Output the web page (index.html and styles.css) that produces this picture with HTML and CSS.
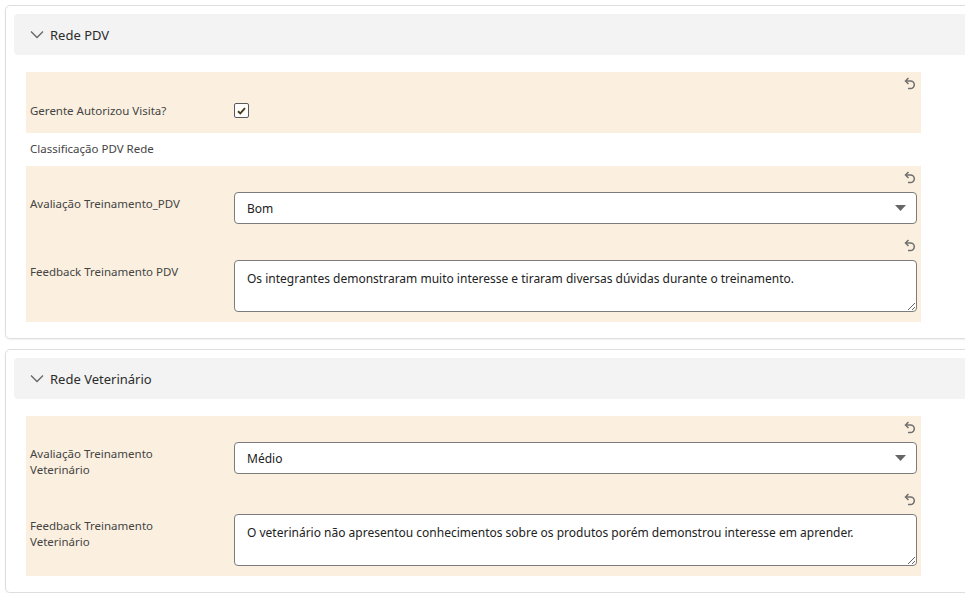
FILE: index.html
```html
<!DOCTYPE html>
<html lang="pt">
<head>
<meta charset="utf-8">
<link rel="stylesheet" href="styles.css">
</head>
<body>
<div class="page">
  <section class="card">
    <div class="card-header">
      <svg class="chev" width="14" height="9" viewBox="0 0 14 9"><path d="M1 1.5 L7 7.5 L13 1.5" fill="none" stroke="#666" stroke-width="1.3"/></svg>
      <span class="card-title">Rede PDV</span>
    </div>
    <div class="card-body">
      <div class="field">
        <div class="field-top"><svg class="undo" width="12" height="13" viewBox="0 0 12 13"><path d="M4.5 1 L1.5 4 L4.5 7" fill="none" stroke="#6f6f6f" stroke-width="1.5"/><path d="M2 4 H6.5 A3.8 3.8 0 0 1 6.5 11.6 H4" fill="none" stroke="#6f6f6f" stroke-width="1.5"/></svg></div>
        <div class="field-main check-row">
          <div class="label">Gerente Autorizou Visita?</div>
          <div class="control"><span class="checkbox"><svg width="9" height="8" viewBox="0 0 9 8"><path d="M1 4.3 L3.3 6.5 L8 1.2" fill="none" stroke="#4a3b17" stroke-width="1.9"/></svg></span></div>
        </div>
      </div>
      <div class="plain-label">Classificação PDV Rede</div>
      <div class="field">
        <div class="field-top"><svg class="undo" width="12" height="13" viewBox="0 0 12 13"><path d="M4.5 1 L1.5 4 L4.5 7" fill="none" stroke="#6f6f6f" stroke-width="1.5"/><path d="M2 4 H6.5 A3.8 3.8 0 0 1 6.5 11.6 H4" fill="none" stroke="#6f6f6f" stroke-width="1.5"/></svg></div>
        <div class="field-main">
          <div class="label">Avaliação Treinamento_PDV</div>
          <div class="control"><div class="select"><span>Bom</span><svg width="11" height="6" viewBox="0 0 11 6"><path d="M0 0 H11 L5.5 6 Z" fill="#666"/></svg></div></div>
        </div>
      </div>
      <div class="field">
        <div class="field-top"><svg class="undo" width="12" height="13" viewBox="0 0 12 13"><path d="M4.5 1 L1.5 4 L4.5 7" fill="none" stroke="#6f6f6f" stroke-width="1.5"/><path d="M2 4 H6.5 A3.8 3.8 0 0 1 6.5 11.6 H4" fill="none" stroke="#6f6f6f" stroke-width="1.5"/></svg></div>
        <div class="field-main">
          <div class="label">Feedback Treinamento PDV</div>
          <div class="control"><textarea class="textarea" readonly>Os integrantes demonstraram muito interesse e tiraram diversas dúvidas durante o treinamento.</textarea></div>
        </div>
      </div>
    </div>
  </section>

  <section class="card">
    <div class="card-header">
      <svg class="chev" width="14" height="9" viewBox="0 0 14 9"><path d="M1 1.5 L7 7.5 L13 1.5" fill="none" stroke="#666" stroke-width="1.3"/></svg>
      <span class="card-title">Rede Veterinário</span>
    </div>
    <div class="card-body">
      <div class="field">
        <div class="field-top"><svg class="undo" width="12" height="13" viewBox="0 0 12 13"><path d="M4.5 1 L1.5 4 L4.5 7" fill="none" stroke="#6f6f6f" stroke-width="1.5"/><path d="M2 4 H6.5 A3.8 3.8 0 0 1 6.5 11.6 H4" fill="none" stroke="#6f6f6f" stroke-width="1.5"/></svg></div>
        <div class="field-main">
          <div class="label">Avaliação Treinamento<br>Veterinário</div>
          <div class="control"><div class="select"><span>Médio</span><svg width="11" height="6" viewBox="0 0 11 6"><path d="M0 0 H11 L5.5 6 Z" fill="#666"/></svg></div></div>
        </div>
      </div>
      <div class="field">
        <div class="field-top"><svg class="undo" width="12" height="13" viewBox="0 0 12 13"><path d="M4.5 1 L1.5 4 L4.5 7" fill="none" stroke="#6f6f6f" stroke-width="1.5"/><path d="M2 4 H6.5 A3.8 3.8 0 0 1 6.5 11.6 H4" fill="none" stroke="#6f6f6f" stroke-width="1.5"/></svg></div>
        <div class="field-main">
          <div class="label">Feedback Treinamento<br>Veterinário</div>
          <div class="control"><textarea class="textarea" readonly>O veterinário não apresentou conhecimentos sobre os produtos porém demonstrou interesse em aprender.</textarea></div>
        </div>
      </div>
    </div>
  </section>
</div>
</body>
</html>
```

FILE: styles.css
```css
html, body {
  margin: 0;
  padding: 0;
  background: #ffffff;
  overflow: hidden;
}
body {
  font-family: "Noto Sans", "Open Sans", sans-serif;
  color: #333;
}
.page {
  padding: 5px 0 0 5px;
  width: 990px;
  display: flex;
  flex-direction: column;
  gap: 10px;
}
.card {
  border: 1px solid #dedede;
  border-radius: 5px;
  padding: 8px 8px 16px 8px;
  box-shadow: 0 1px 2px rgba(0,0,0,0.06);
}
.card-header {
  height: 41px;
  background: #f3f3f3;
  border-radius: 4px;
  display: flex;
  align-items: center;
  padding-left: 16px;
  gap: 6px;
}
.chev { display: block; }
.card-title {
  font-size: 13px;
  color: #2b2b2b;
}
.card-body {
  padding: 17px 0 0 12px;
  width: 895px;
}
.field {
  background: #fbf0df;
  padding: 0 4px 10px 4px;
}
.field-top {
  height: 26px;
  display: flex;
  justify-content: flex-end;
  align-items: flex-start;
  padding-top: 5px;
  box-sizing: border-box;
}
.undo { display: block; margin-right: 1px; }
.field-main {
  display: grid;
  grid-template-columns: 204px 1fr;
}
.label {
  font-size: 11.5px;
  line-height: 16px;
  color: #444;
  padding-top: 4px;
}
.check-row {
  height: 25px;
  align-items: center;
}
.check-row .label { padding-top: 1px; }
.checkbox {
  width: 13px;
  height: 13px;
  border: 1px solid #5a5a5a;
  border-radius: 2px;
  background: #fff;
  display: flex;
  align-items: center;
  justify-content: center;
}
.plain-label {
  font-size: 11.5px;
  line-height: 16px;
  color: #444;
  padding: 8px 4px 9px 4px;
}
.select {
  height: 30px;
  border: 1px solid #7c7c7c;
  border-radius: 4px;
  background: #fff;
  display: flex;
  align-items: center;
  justify-content: space-between;
  padding: 0 10px 0 12px;
  font-size: 12px;
  color: #222;
}
.textarea {
  display: block;
  width: 100%;
  box-sizing: border-box;
  height: 52px;
  border: 1px solid #7c7c7c;
  border-radius: 4px;
  background: #fff;
  font-family: "Noto Sans", "Open Sans", sans-serif;
  font-size: 12px;
  line-height: 16px;
  color: #222;
  padding: 10px 12px;
  resize: vertical;
  outline: none;
  overflow: hidden;
}
```
